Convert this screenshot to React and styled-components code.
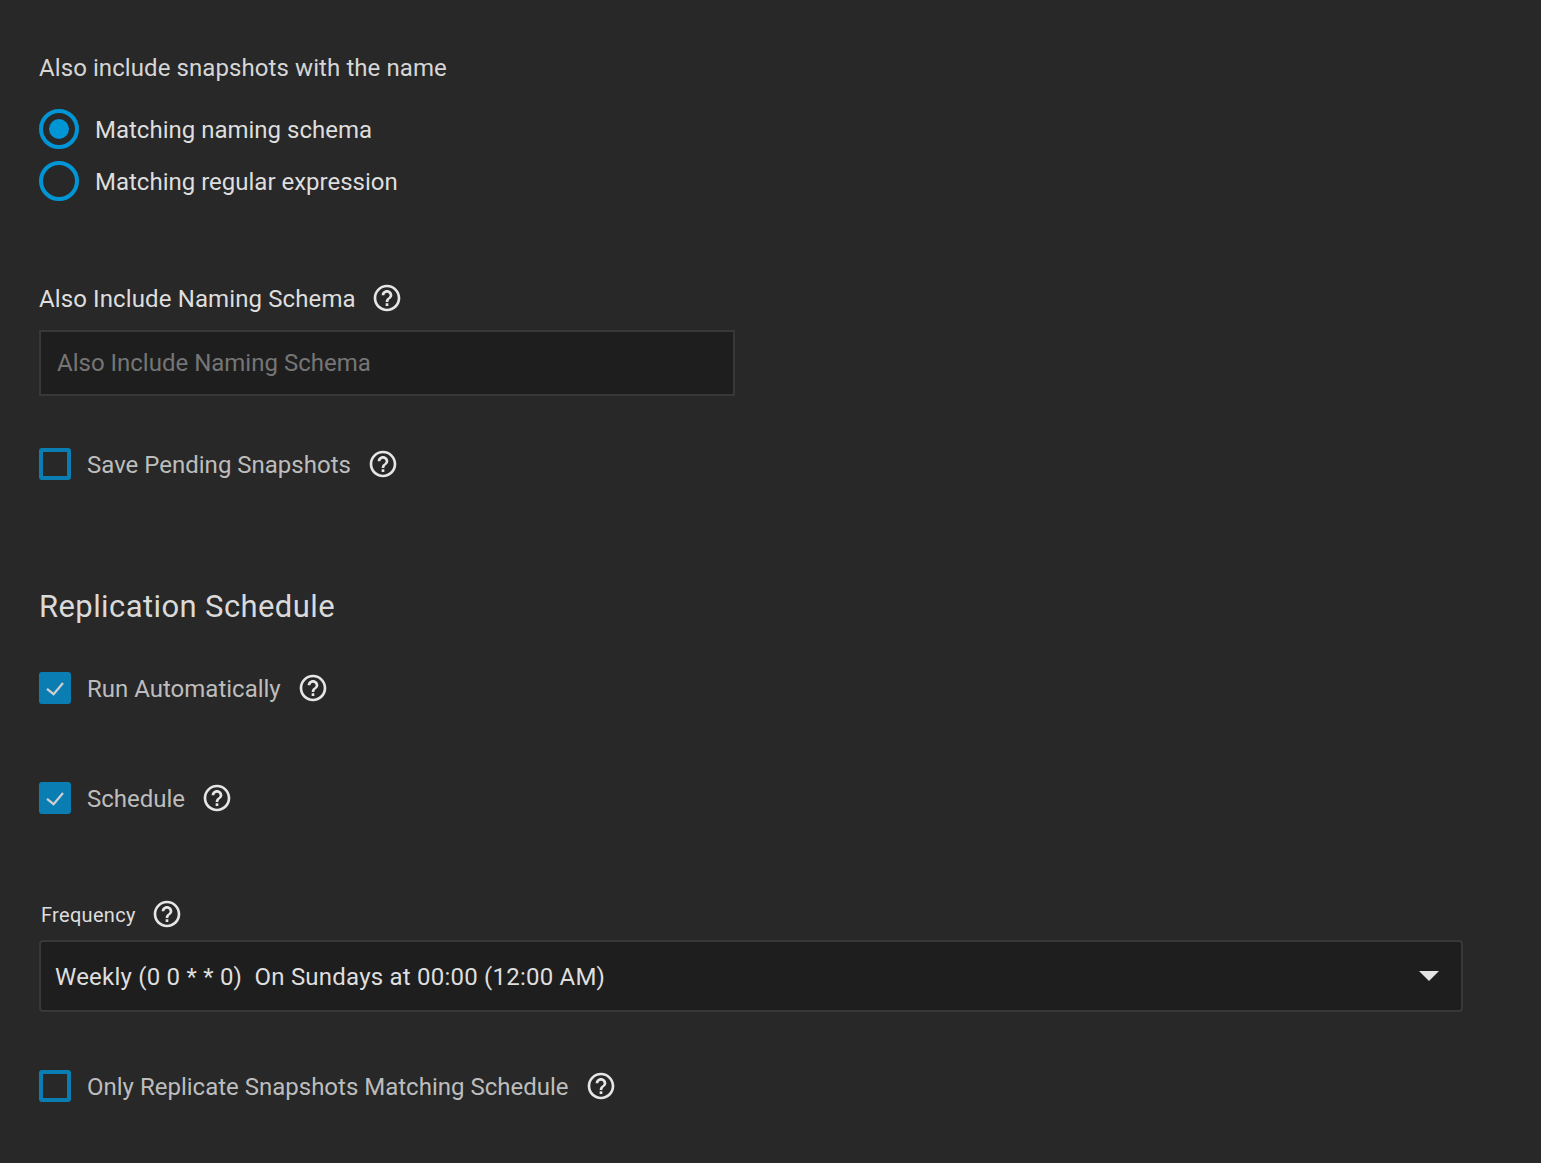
import React from 'react';
import styled, { createGlobalStyle } from 'styled-components';

const GlobalStyle = createGlobalStyle`
    html, body {
        margin: 0;
        background: #282828;
    }
    body {
        font-family: Roboto, "Liberation Sans", sans-serif;
    }
`

const Page = styled.div`
    width: 1541px;
    height: 1163px;
    overflow: hidden;
    box-sizing: border-box;
    padding: 50px 79px 0 39px;
    background: #282828;
    display: flex;
    flex-direction: column;
`
const Title = styled.div`
    font-size: 24px;
    line-height: 36px;
    letter-spacing: 0.085px;
    color: #d6d6d6;
    margin-bottom: 23px;
`
const RadioGroup = styled.div`
    display: flex;
    flex-direction: column;
    gap: 12px;
    margin-bottom: 81px;
`
const RadioRow = styled.label`
    display: flex;
    align-items: center;
    gap: 16px;
    height: 40px;
    font-size: 24px;
    color: #dedede;
`
const LowText = styled.span`
    padding-top: 2px;
`
const RadioRing = styled.span`
    box-sizing: border-box;
    width: 40px;
    height: 40px;
    border-radius: 50%;
    border: 4px solid #0095d5;
    display: flex;
    align-items: center;
    justify-content: center;
    &::after {
        content: '';
        width: 20px;
        height: 20px;
        border-radius: 50%;
        background: ${({ checked }) => checked ? '#0095d5' : 'transparent'};
    }
`
const FieldLabel = styled.div`
    display: flex;
    align-items: center;
    gap: 15px;
    height: 32px;
    font-size: 24px;
    letter-spacing: 0.115px;
    color: #dedede;
    margin-bottom: 16px;
`
const TextInput = styled.div`
    box-sizing: border-box;
    width: 696px;
    height: 66px;
    display: flex;
    align-items: center;
    padding: 0 16px;
    background: #1e1e1e;
    border: 2px solid #383838;
    font-size: 24px;
    color: #757575;
    margin-bottom: 52px;
`
const CheckRow = styled.label`
    display: flex;
    align-items: center;
    height: 32px;
    font-size: 24px;
    color: #bdbdbd;
    margin-bottom: ${({ after }) => after}px;
`
const CheckBox = styled.span`
    box-sizing: border-box;
    width: 32px;
    height: 32px;
    flex: none;
    border-radius: 3px;
    border: 4px solid #0a7eb3;
    background: ${({ checked }) => checked ? '#0a7eb3' : 'transparent'};
    margin-right: 16px;
    display: flex;
    align-items: center;
    justify-content: center;
`
const CheckText = styled(LowText)`
    margin-right: 16px;
`
const Heading = styled.h2`
    margin: 0 0 46px;
    height: 40px;
    line-height: 42px;
    font-size: 31px;
    letter-spacing: 0.4px;
    font-weight: 400;
    color: #dadada;
`
const FrequencyLabel = styled.div`
    display: flex;
    align-items: center;
    gap: 15px;
    height: 32px;
    padding-left: 2px;
    font-size: 20px;
    letter-spacing: 0.3px;
    color: #dedede;
    margin-bottom: 10px;
`
const SelectBox = styled.div`
    box-sizing: border-box;
    width: 1424px;
    height: 72px;
    display: flex;
    align-items: center;
    justify-content: space-between;
    padding: 0 22px 0 14px;
    background: #1e1e1e;
    border: 2px solid #383838;
    border-radius: 4px;
    font-size: 24px;
    letter-spacing: 0.22px;
    color: #dedede;
    white-space: pre;
    margin-bottom: 58px;
`
const Caret = styled.span`
    width: 0;
    height: 0;
    border-left: 10px solid transparent;
    border-right: 10px solid transparent;
    border-top: 10px solid #e4e4e4;
`
const HelpSvg = styled.svg`
    width: 32px;
    height: 32px;
    flex: none;
    fill: #e6e6e6;
`

const HelpIcon = () => (
    <HelpSvg viewBox="0 0 24 24">
        <path d="M11 18h2v-2h-2v2zm1-16C6.48 2 2 6.48 2 12s4.48 10 10 10 10-4.48 10-10S17.52 2 12 2zm0 18c-4.41 0-8-3.59-8-8s3.59-8 8-8 8 3.59 8 8-3.59 8-8 8zm0-14c-2.21 0-4 1.79-4 4h2c0-1.1.9-2 2-2s2 .9 2 2c0 2-3 1.75-3 5h2c0-2.25 3-2.5 3-5 0-2.21-1.79-4-4-4z" />
    </HelpSvg>
)

const Check = ({ label, checked, after }) => (
    <CheckRow after={after}>
        <CheckBox checked={checked}>
            {checked && (
                <svg width="20" height="16" viewBox="0 0 20 16" fill="none" stroke="#d0d0d0" strokeWidth="2.2">
                    <path d="M2 8.8 L8.6 14.2 L18 3" />
                </svg>
            )}
        </CheckBox>
        <CheckText>{label}</CheckText>
        <HelpIcon />
    </CheckRow>
)

const App = () => {
    return (
        <Page>
            <GlobalStyle />
            <Title>Also include snapshots with the name</Title>
            <RadioGroup>
                <RadioRow><RadioRing checked /><LowText>Matching naming schema</LowText></RadioRow>
                <RadioRow><RadioRing /><LowText>Matching regular expression</LowText></RadioRow>
            </RadioGroup>
            <FieldLabel><LowText>Also Include Naming Schema</LowText><HelpIcon /></FieldLabel>
            <TextInput>Also Include Naming Schema</TextInput>
            <Check label="Save Pending Snapshots" after={106} />
            <Heading>Replication Schedule</Heading>
            <Check label="Run Automatically" checked after={78} />
            <Check label="Schedule" checked after={84} />
            <FrequencyLabel><LowText>Frequency</LowText><HelpIcon /></FrequencyLabel>
            <SelectBox>
                <LowText>Weekly (0 0 * * 0)  On Sundays at 00:00 (12:00 AM)</LowText>
                <Caret />
            </SelectBox>
            <Check label="Only Replicate Snapshots Matching Schedule" after={0} />
        </Page>
    )
}

export default App;
